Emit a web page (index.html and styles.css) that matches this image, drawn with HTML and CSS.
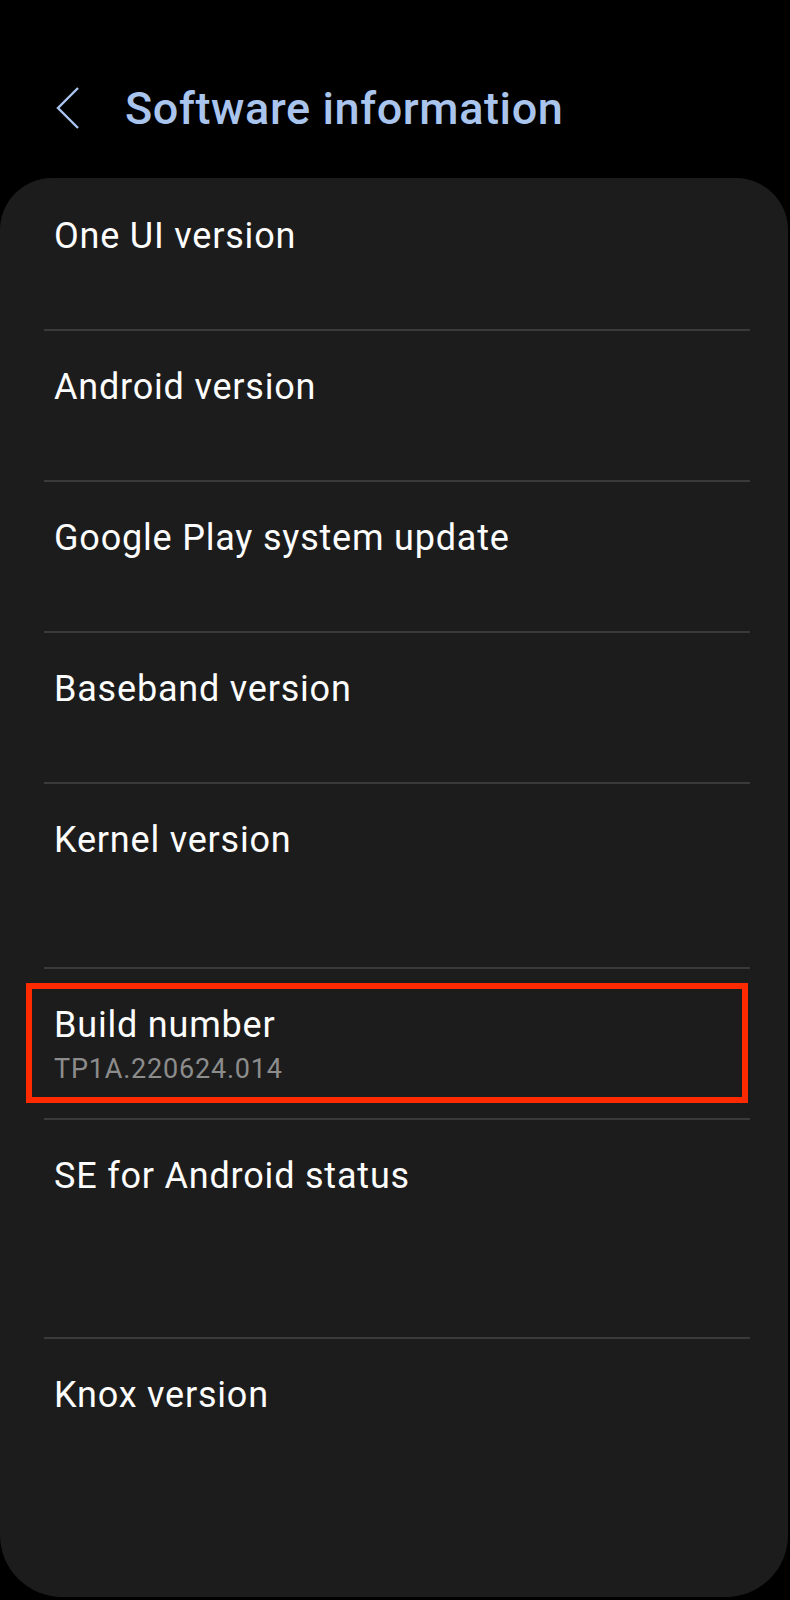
FILE: index.html
```html
<!DOCTYPE html>
<html lang="en">
<head>
    <meta charset="UTF-8">
    <meta name="viewport" content="width=device-width, initial-scale=1.0">
    <title>Software information</title>
    <link rel="stylesheet" href="styles.css">
</head>
<body>
    <div class="header">
        <svg class="back-icon" width="24" height="42" viewBox="0 0 24 42">
            <polyline points="22,1 2,21 22,41" fill="none" stroke="#a9c5ee" stroke-width="2.4" stroke-linejoin="miter"/>
        </svg>
        <h1 class="title">Software information</h1>
    </div>

    <div class="card">
        <div class="item-row row-first">
            <div class="item-title">One UI version</div>
        </div>
        <div class="item-row">
            <div class="item-title">Android version</div>
        </div>
        <div class="item-row">
            <div class="item-title">Google Play system update</div>
        </div>
        <div class="item-row">
            <div class="item-title">Baseband version</div>
        </div>
        <div class="item-row row-tall">
            <div class="item-title">Kernel version</div>
        </div>
        <div class="item-row row-highlight">
            <div class="item-title">Build number</div>
            <div class="item-summary">TP1A.220624.014</div>
            <div class="highlight-box"></div>
        </div>
        <div class="item-row row-taller">
            <div class="item-title">SE for Android status</div>
        </div>
        <div class="item-row row-last">
            <div class="item-title">Knox version</div>
        </div>
    </div>
</body>
</html>
```

FILE: styles.css
```css
body {
    margin: 0;
    background-color: #000;
    color: #fff;
    font-family: Roboto, 'Noto Sans', sans-serif;
    width: 790px;
    height: 1600px;
    overflow: hidden;
}

.header {
    display: flex;
    align-items: flex-start;
    height: 178px;
    box-sizing: border-box;
    padding-top: 82px;
}

.back-icon {
    margin-left: 56px;
    margin-top: 5px;
    flex-shrink: 0;
}

.title {
    margin: 0 0 0 45px;
    font-size: 45px;
    font-weight: 500;
    line-height: 54px;
    color: #a9c5ee;
    letter-spacing: 0.6px;
}

.card {
    background-color: #1c1c1c;
    border-radius: 52px 52px 62px 62px;
    margin-right: 2px;
    height: 1419px;
    box-sizing: border-box;
    padding-top: 2px;
    overflow: hidden;
}

.item-row {
    position: relative;
    margin: 0 38px 0 44px;
    padding: 35px 0 0 10px;
    height: 151px;
    box-sizing: border-box;
    border-bottom: 2px solid #3a3a3a;
}

.row-tall {
    height: 185px;
}

.row-taller {
    height: 219px;
}

.row-last {
    border-bottom: none;
    height: 258px;
}

.item-title {
    font-size: 36px;
    line-height: 42px;
    letter-spacing: 0.8px;
    color: #fdfdfd;
}

.item-summary {
    margin-top: 7px;
    font-size: 27px;
    line-height: 32px;
    letter-spacing: 0.8px;
    color: #8c8c8c;
}

/* 注目枠 */
.highlight-box {
    position: absolute;
    top: 14px;
    left: -18px;
    width: 722px;
    height: 120px;
    box-sizing: border-box;
    border: 6px solid #ff2a00;
}
```
